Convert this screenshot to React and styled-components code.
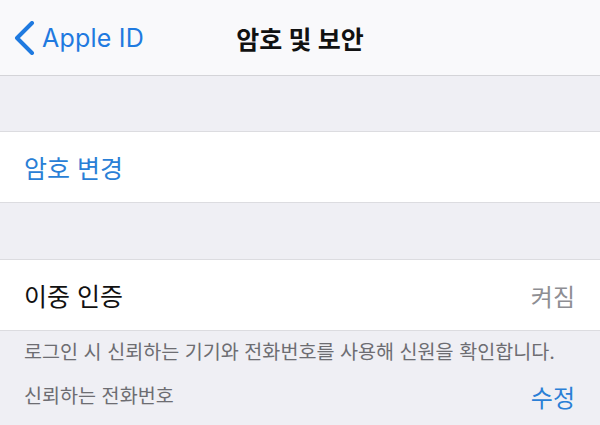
import React from "react";
import styled, { createGlobalStyle } from "styled-components";

const Global = createGlobalStyle`
  html, body { margin: 0; padding: 0; background: #efeff4; }
  body { font-family: "Inter", "Noto Sans CJK KR", sans-serif; -webkit-font-smoothing: antialiased; }
`;

const Page = styled.div`
  width: 600px;
  height: 425px;
  overflow: hidden;
  background: #efeff4;
  display: flex;
  flex-direction: column;
`;

const NavBar = styled.header`
  height: 75px;
  flex: none;
  background: #f9f9fb;
  border-bottom: 1px solid #d4d4d8;
  display: grid;
  grid-template-columns: 1fr auto 1fr;
  align-items: center;
`;

const BackButton = styled.div`
  display: flex;
  align-items: center;
  gap: 6px;
  padding-left: 14px;
  color: #1f7ae0;
  font-size: 25px;
  letter-spacing: 0.2px;
`;

const Title = styled.h1`
  margin: 0;
  font-size: 25px;
  font-weight: 600;
  color: #111;
`;

const Spacer = styled.div`
  height: ${(p) => p.h}px;
  flex: none;
`;

const Group = styled.section`
  background: #fff;
  border-top: 1px solid #dcdce0;
  border-bottom: 1px solid #dcdce0;
`;

const Row = styled.div`
  height: 70px;
  display: flex;
  align-items: center;
  justify-content: space-between;
  padding: 0 25px 0 24px;
`;

const RowLabel = styled.span`
  font-size: 25px;
  color: ${(p) => (p.link ? "#2a7fd6" : "#111")};
`;

const RowValue = styled.span`
  font-size: 24px;
  color: #8e8e93;
`;

const Footer = styled.p`
  margin: 0;
  padding: 8px 24px 0;
  font-size: 19.6px;
  color: #6d6d72;
  line-height: 26px;
`;

const PhoneHeader = styled.div`
  display: flex;
  justify-content: space-between;
  align-items: center;
  padding: 10px 25px 0 24px;
`;

const PhoneLabel = styled.span`
  font-size: 19.6px;
  color: #6d6d72;
`;

const EditLink = styled.span`
  font-size: 24px;
  color: #2a7fd6;
  margin-top: 4px;
`;

const Chevron = () => (
  <svg width="22" height="34" viewBox="0 0 22 34" fill="none">
    <path d="M18 2 L3 17 L18 32" stroke="#1f7ae0" strokeWidth="4" strokeLinecap="round" strokeLinejoin="round" />
  </svg>
);

export default function App() {
  return (
    <>
      <Global />
      <Page>
        <NavBar>
          <BackButton>
            <Chevron />
            <span>Apple ID</span>
          </BackButton>
          <Title>암호 및 보안</Title>
          <div />
        </NavBar>
        <Spacer h={55} />
        <Group>
          <Row>
            <RowLabel link>암호 변경</RowLabel>
          </Row>
        </Group>
        <Spacer h={56} />
        <Group>
          <Row>
            <RowLabel>이중 인증</RowLabel>
            <RowValue>켜짐</RowValue>
          </Row>
        </Group>
        <Footer>로그인 시 신뢰하는 기기와 전화번호를 사용해 신원을 확인합니다.</Footer>
        <PhoneHeader>
          <PhoneLabel>신뢰하는 전화번호</PhoneLabel>
          <EditLink>수정</EditLink>
        </PhoneHeader>
      </Page>
    </>
  );
}
